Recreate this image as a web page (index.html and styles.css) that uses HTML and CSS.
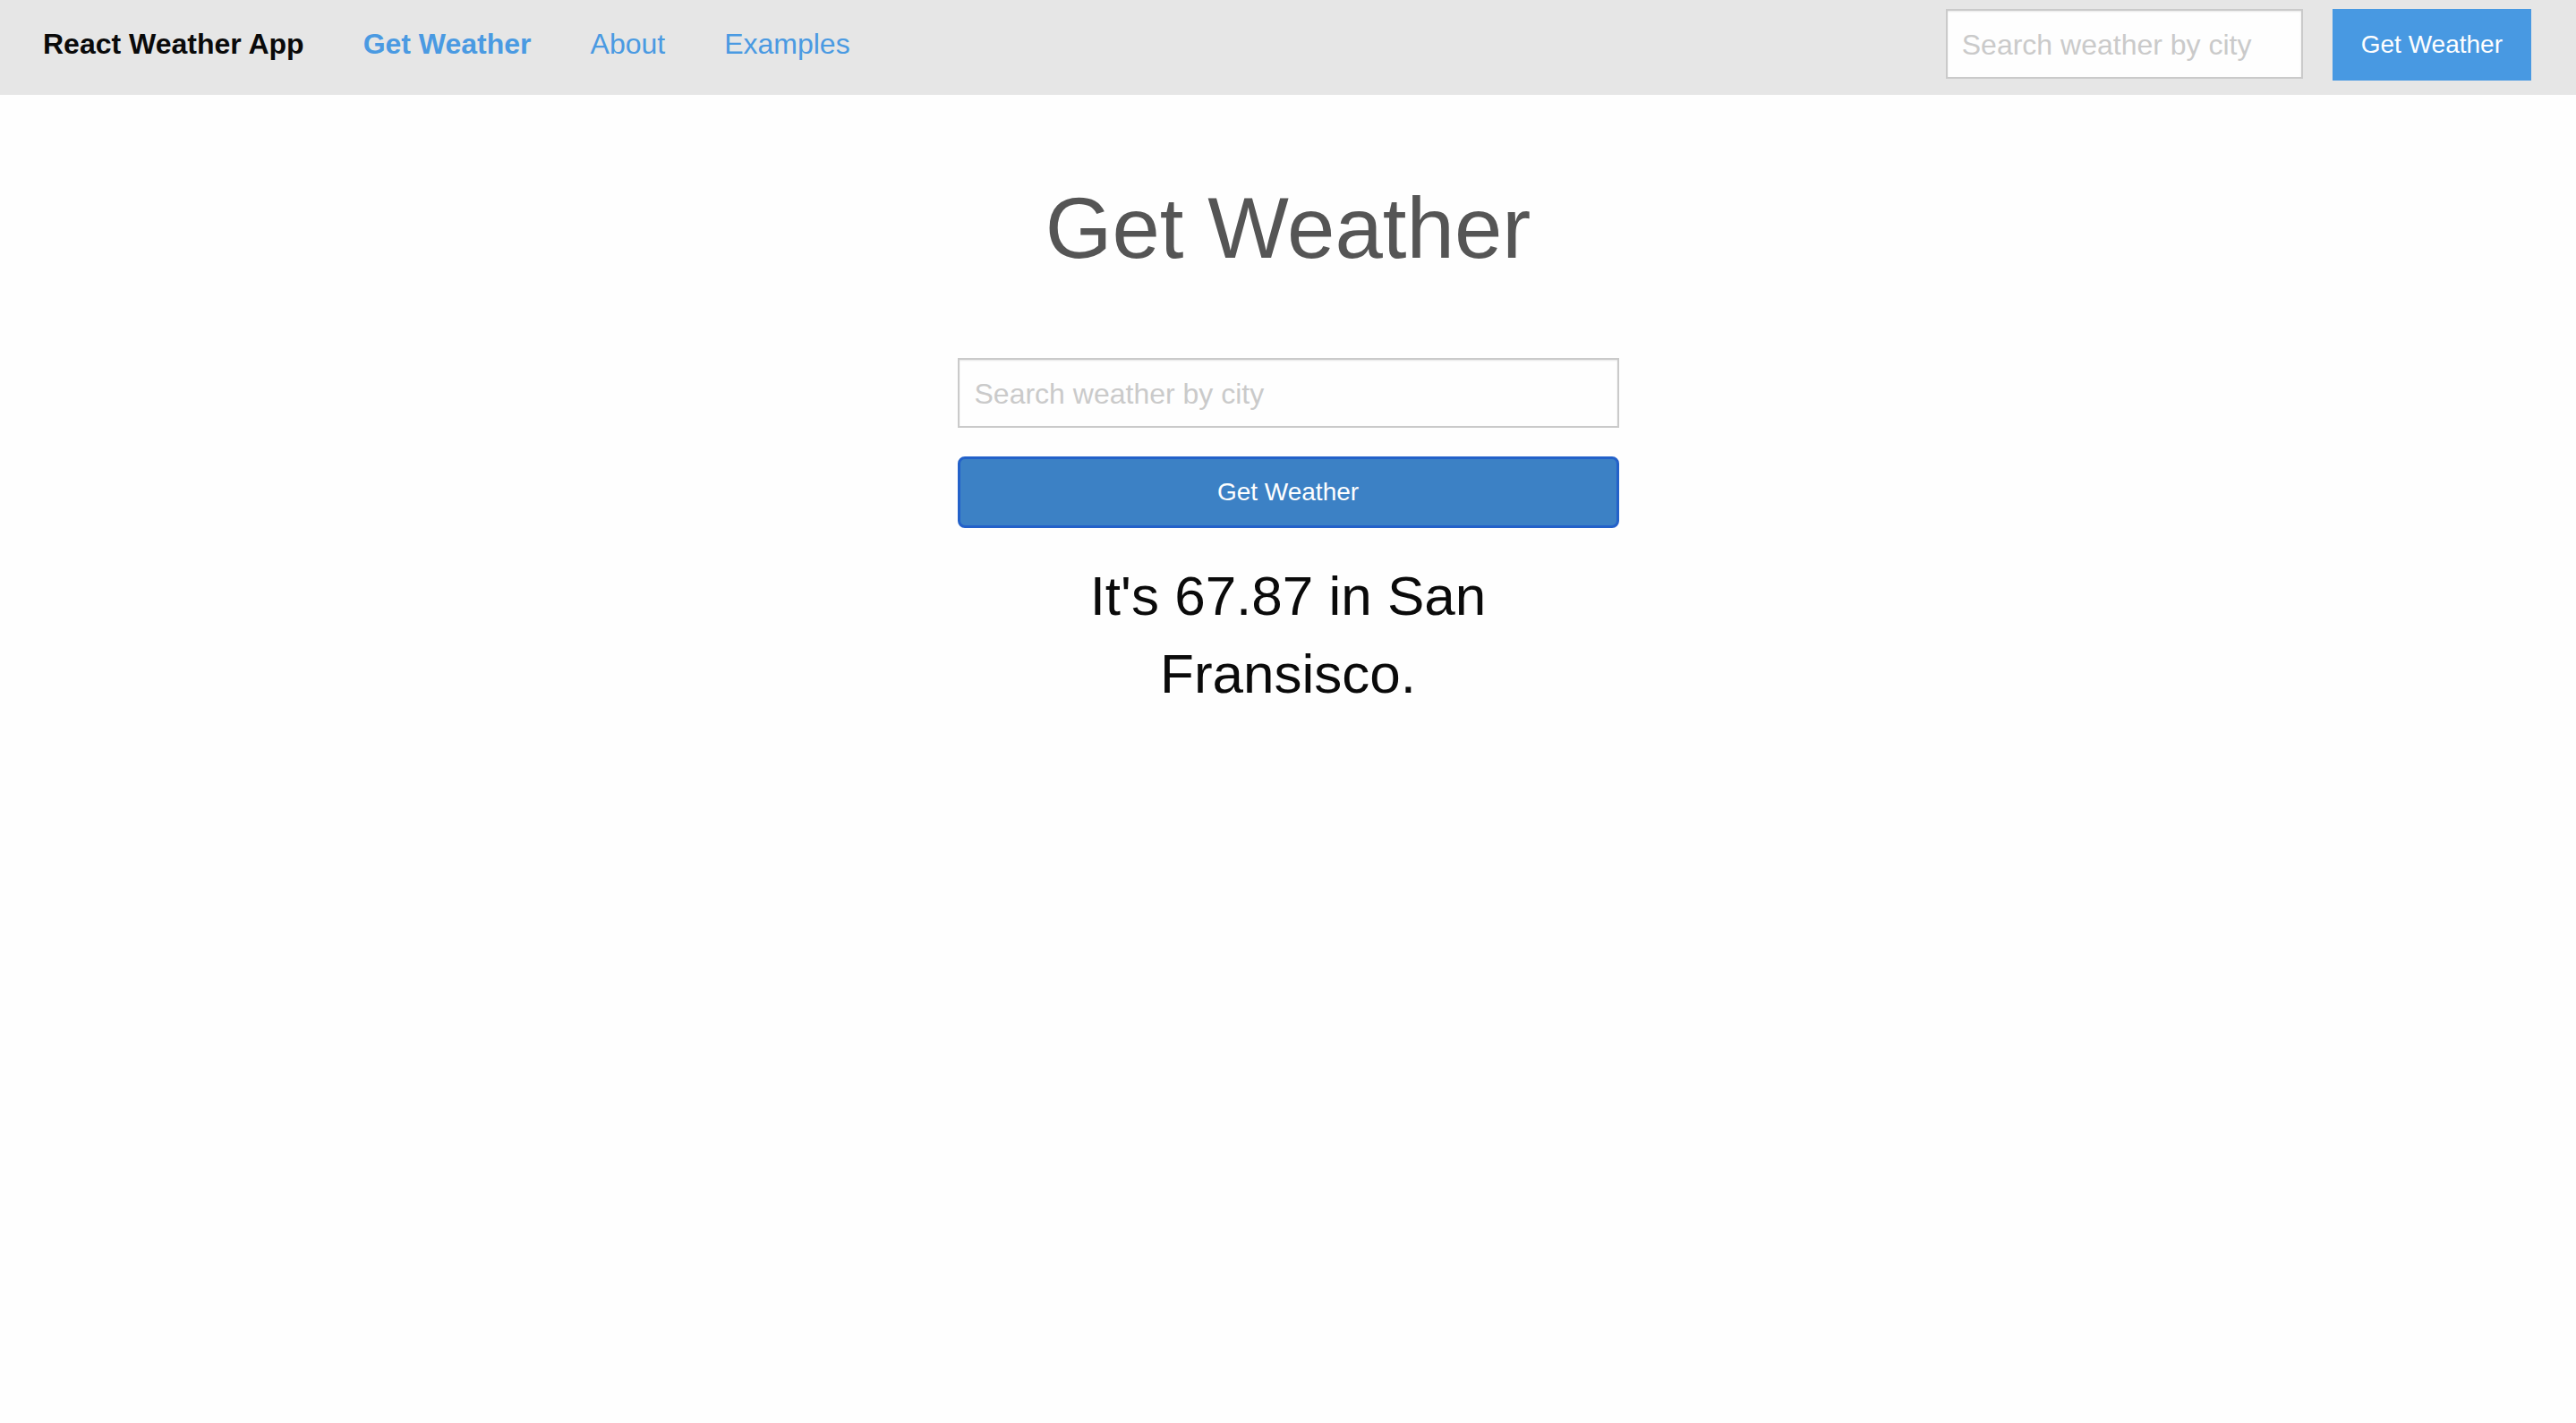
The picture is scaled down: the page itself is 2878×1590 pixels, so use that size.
FILE: index.html
```html
<!DOCTYPE html>
<html lang="en">
<head>
<meta charset="utf-8">
<title>React Weather App</title>
<link rel="stylesheet" href="styles.css">
</head>
<body>
<header class="top-bar">
  <ul class="menu">
    <li class="menu-text">React Weather App</li>
    <li><a class="nav-link active" href="#">Get Weather</a></li>
    <li><a class="nav-link" href="#">About</a></li>
    <li><a class="nav-link" href="#">Examples</a></li>
  </ul>
  <form class="top-search">
    <input class="top-input" type="search" placeholder="Search weather by city">
    <button class="top-button" type="button">Get Weather</button>
  </form>
</header>
<main class="content">
  <h1 class="page-title">Get Weather</h1>
  <form class="weather-form">
    <input class="city-input" type="search" placeholder="Search weather by city">
    <button class="submit-button" type="button">Get Weather</button>
  </form>
  <h3 class="result">It's 67.87 in San Fransisco.</h3>
</main>
</body>
</html>
```
FILE: styles.css
```css
* { box-sizing: border-box; }
html, body {
  margin: 0;
  padding: 0;
  background: #fefefe;
  color: #0a0a0a;
  font-family: "Liberation Sans", Arial, Helvetica, sans-serif;
}
.top-bar {
  display: flex;
  justify-content: space-between;
  align-items: flex-start;
  height: 106px;
  padding: 10px 50px 0 48px;
  background: #e6e6e6;
}
.menu {
  display: flex;
  align-items: baseline;
  list-style: none;
  margin: 0;
  padding: 0;
  line-height: 78px;
}
.menu-text {
  font-size: 32px;
  font-weight: bold;
  color: #0a0a0a;
  margin-right: 66px;
}
.nav-link {
  font-size: 32px;
  color: #4a9ae2;
  text-decoration: none;
  margin-right: 66px;
}
.nav-link.active { font-weight: bold; }
.top-search {
  display: flex;
  align-items: flex-start;
  gap: 33px;
  margin: 0;
}
.top-input {
  width: 399px;
  height: 78px;
  margin: 0;
  padding: 2px 16px 0;
  border: 2px solid #cacaca;
  background: #fefefe;
  box-shadow: inset 0 1px 2px rgba(10,10,10,0.1);
  font-family: inherit;
  font-size: 32px;
  color: #0a0a0a;
  outline: none;
}
.top-input::placeholder, .city-input::placeholder { color: #cacaca; }
.top-button {
  height: 80px;
  padding: 0 32px;
  border: none;
  background: #4899e2;
  color: #fefefe;
  font-family: inherit;
  font-size: 28px;
}
.content {
  width: 739px;
  margin: 0 auto;
  text-align: center;
}
.page-title {
  margin: 82px 0 0;
  font-size: 96px;
  font-weight: normal;
  line-height: 1.4;
  color: #555555;
}
.weather-form {
  display: flex;
  flex-direction: column;
  gap: 32px;
  margin: 78px 0 0;
}
.city-input {
  width: 100%;
  height: 78px;
  margin: 0;
  padding: 2px 17px 0;
  border: 2px solid #cacaca;
  background: #fefefe;
  box-shadow: inset 0 1px 2px rgba(10,10,10,0.1);
  font-family: inherit;
  font-size: 32px;
  outline: none;
}
.submit-button {
  width: 100%;
  height: 80px;
  border: 3px solid #2361c9;
  border-radius: 8px;
  background: #3c81c5;
  color: #fefefe;
  font-family: inherit;
  font-size: 28px;
}
.result {
  margin: 33px 0 0;
  font-size: 62px;
  font-weight: normal;
  line-height: 1.4;
  color: #0a0a0a;
}
```
